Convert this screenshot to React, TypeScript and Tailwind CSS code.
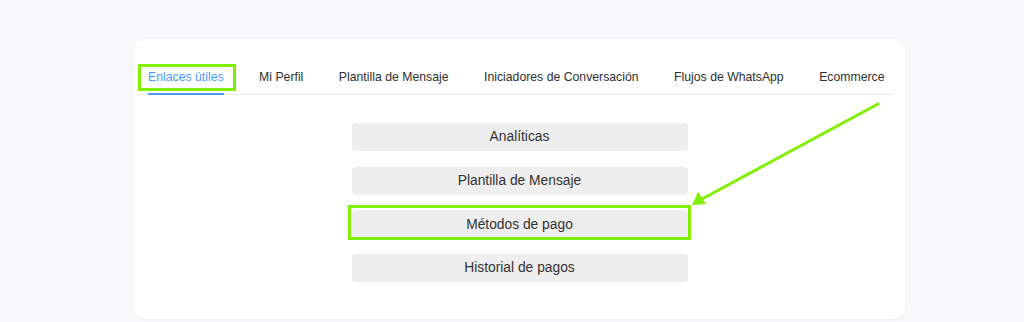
import React, { useState } from 'react';

const tabs = [
  'Enlaces útiles',
  'Mi Perfil',
  'Plantilla de Mensaje',
  'Iniciadores de Conversación',
  'Flujos de WhatsApp',
  'Ecommerce',
];

const links = ['Analíticas', 'Plantilla de Mensaje', 'Métodos de pago', 'Historial de pagos'];

export default function App() {
  const [active, setActive] = useState(0);

  return (
    <div
      className="relative min-h-[322px] bg-[#f7f8fa] pt-[39px]"
      style={{ fontFamily: '"Liberation Sans", Arial, sans-serif' }}
    >
      <div className="ml-[134px] w-[771px] rounded-xl bg-white pt-[25px] pb-[37px] shadow-[0_1px_3px_rgba(0,0,0,0.04)]">
        {/* Tabs */}
        <div className="ml-[3px] mr-[12px] flex gap-[35.5px] border-b border-[#e5e8ee] pl-[11px]">
          {tabs.map((tab, i) => (
            <button
              key={tab}
              onClick={() => setActive(i)}
              className={`relative whitespace-nowrap pt-[6px] pb-[10px] text-[12.25px] leading-[14px] ${
                active === i ? 'text-[#4a9bff]' : 'text-[#2f2f2f]'
              }`}
            >
              {tab}
              {active === i && (
                <span className="absolute bottom-[-1px] left-0 right-0 h-[2px] bg-[#4a9bff]" />
              )}
              {i === 0 && (
                <span className="pointer-events-none absolute -left-[10px] -right-[12px] top-0 bottom-[3px] border-[3px] border-[#80f000]" />
              )}
            </button>
          ))}
        </div>

        {/* Links */}
        <div className="mt-[28px] flex flex-col items-center gap-[15.7px]">
          {links.map((label, i) => (
            <div key={label} className="relative w-[336px]">
              <button className="flex h-[28px] w-full items-center justify-center rounded bg-[#eeeeee] pt-[1px] text-[13.8px] text-[#333]">
                {label}
              </button>
              {i === 2 && (
                <span className="pointer-events-none absolute -left-[4px] -right-[3px] -top-[5px] -bottom-[2px] border-[3px] border-[#80f000]" />
              )}
            </div>
          ))}
        </div>
      </div>

      {/* Annotation arrow */}
      <svg
        className="pointer-events-none absolute left-0 top-0"
        width="1024"
        height="322"
        viewBox="0 0 1024 322"
      >
        <line x1="878" y1="104" x2="702" y2="199" stroke="#80f000" strokeWidth="3" strokeLinecap="round" />
        <polygon points="692,205 698,192 706,204" fill="#80f000" />
      </svg>
    </div>
  );
}
